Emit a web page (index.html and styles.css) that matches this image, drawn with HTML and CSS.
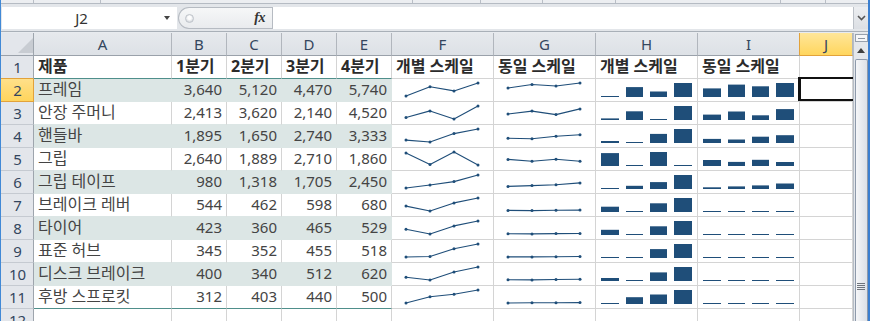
FILE: index.html
```html
<!DOCTYPE html>
<html lang="ko">
<head>
<meta charset="utf-8">
<title>스파크라인</title>
<link rel="stylesheet" href="styles.css">
</head>
<body>
<div class="app">
  <div class="ribbon">
    <span class="rs w33"></span><span class="rs w67"></span><span class="rs w312"></span><span class="rs w68"></span><span class="rs w62"></span><span class="rs w73"></span><span class="rs w165"></span><span class="rs w45"></span>
  </div>
  <div class="fbar">
    <div class="namebox"><span class="nb-text">J2</span><span class="nb-arrow"><i></i></span></div>
    <div class="fxarea"><span class="knob"></span><span class="fx">fx</span></div>
    <div class="finput"></div>
    <div class="fexp"><svg width="9" height="6" viewBox="0 0 9 6"><polyline points="1,1 4.5,4.5 8,1" fill="none" stroke="#555" stroke-width="1.6"/></svg></div>
  </div>
  <div class="main">
    <div class="sheet">
      <!-- column headers -->
      <div class="corner"><i class="tri"></i></div>
      <div class="ch">A</div><div class="ch">B</div><div class="ch">C</div><div class="ch">D</div><div class="ch">E</div>
      <div class="ch">F</div><div class="ch">G</div><div class="ch">H</div><div class="ch ch-presel">I</div><div class="ch ch-sel">J</div>

      <!-- row 1 -->
      <div class="rh rh-presel">1</div>
      <div class="c h hb">제품</div>
      <div class="c h hb">1분기</div>
      <div class="c h hb">2분기</div>
      <div class="c h hb">3분기</div>
      <div class="c h hb">4분기</div>
      <div class="c h">개별 스케일</div>
      <div class="c h">동일 스케일</div>
      <div class="c h">개별 스케일</div>
      <div class="c h">동일 스케일</div>
      <div class="c"></div>

      <!-- row 2 -->
      <div class="rh rh-sel">2</div>
      <div class="c txt tt">프레임</div>
      <div class="c num tt">3,640</div><div class="c num tt">5,120</div><div class="c num tt">4,470</div><div class="c num tt">5,740</div>
      <div class="c sp"><svg class="spark" width="101" height="22"><polyline points="14,17 38,7.8 62,11.9 86,4"/><circle cx="14" cy="17" r="1.5"/><circle cx="38" cy="7.8" r="1.5"/><circle cx="62" cy="11.9" r="1.5"/><circle cx="86" cy="4" r="1.5"/></svg></div>
      <div class="c sp"><svg class="spark" width="101" height="22"><polyline points="14,9 38,5.5 62,7 86,4"/><circle cx="14" cy="9" r="1.5"/><circle cx="38" cy="5.5" r="1.5"/><circle cx="62" cy="7" r="1.5"/><circle cx="86" cy="4" r="1.5"/></svg></div>
      <div class="c sp"><svg class="spark" width="101" height="22"><rect x="5" y="17" width="18" height="1"/><rect x="30" y="8.1" width="17" height="9.9"/><rect x="54" y="12.5" width="17" height="5.5"/><rect x="78" y="4" width="18" height="14"/></svg></div>
      <div class="c sp"><svg class="spark" width="101" height="22"><rect x="5" y="9.4" width="18" height="8.6"/><rect x="30" y="5.6" width="17" height="12.4"/><rect x="54" y="7.3" width="17" height="10.7"/><rect x="78" y="4" width="18" height="14"/></svg></div>
      <div class="c sel"></div>

      <!-- row 3 -->
      <div class="rh">3</div>
      <div class="c txt tb">안장 주머니</div>
      <div class="c num tb">2,413</div><div class="c num tb">3,620</div><div class="c num tb">2,140</div><div class="c num tb">4,520</div>
      <div class="c sp"><svg class="spark" width="101" height="22"><polyline points="14,15.5 38,8.9 62,17 86,4"/><circle cx="14" cy="15.5" r="1.5"/><circle cx="38" cy="8.9" r="1.5"/><circle cx="62" cy="17" r="1.5"/><circle cx="86" cy="4" r="1.5"/></svg></div>
      <div class="c sp"><svg class="spark" width="101" height="22"><polyline points="14,12 38,9.1 62,12.6 86,6.9"/><circle cx="14" cy="12" r="1.5"/><circle cx="38" cy="9.1" r="1.5"/><circle cx="62" cy="12.6" r="1.5"/><circle cx="86" cy="6.9" r="1.5"/></svg></div>
      <div class="c sp"><svg class="spark" width="101" height="22"><rect x="5" y="16.4" width="18" height="1.6"/><rect x="30" y="9.3" width="17" height="8.7"/><rect x="54" y="17" width="17" height="1"/><rect x="78" y="4" width="18" height="14"/></svg></div>
      <div class="c sp"><svg class="spark" width="101" height="22"><rect x="5" y="12.6" width="18" height="5.4"/><rect x="30" y="9.5" width="17" height="8.5"/><rect x="54" y="13.3" width="17" height="4.7"/><rect x="78" y="7.1" width="18" height="10.9"/></svg></div>
      <div class="c"></div>

      <!-- row 4 -->
      <div class="rh">4</div>
      <div class="c txt tt">핸들바</div>
      <div class="c num tt">1,895</div><div class="c num tt">1,650</div><div class="c num tt">2,740</div><div class="c num tt">3,333</div>
      <div class="c sp"><svg class="spark" width="101" height="22"><polyline points="14,15.1 38,17 62,8.6 86,4"/><circle cx="14" cy="15.1" r="1.5"/><circle cx="38" cy="17" r="1.5"/><circle cx="62" cy="8.6" r="1.5"/><circle cx="86" cy="4" r="1.5"/></svg></div>
      <div class="c sp"><svg class="spark" width="101" height="22"><polyline points="14,13.2 38,13.8 62,11.2 86,9.8"/><circle cx="14" cy="13.2" r="1.5"/><circle cx="38" cy="13.8" r="1.5"/><circle cx="62" cy="11.2" r="1.5"/><circle cx="86" cy="9.8" r="1.5"/></svg></div>
      <div class="c sp"><svg class="spark" width="101" height="22"><rect x="5" y="16" width="18" height="2"/><rect x="30" y="17" width="17" height="1"/><rect x="54" y="8.9" width="17" height="9.1"/><rect x="78" y="4" width="18" height="14"/></svg></div>
      <div class="c sp"><svg class="spark" width="101" height="22"><rect x="5" y="13.9" width="18" height="4.1"/><rect x="30" y="14.5" width="17" height="3.5"/><rect x="54" y="11.7" width="17" height="6.3"/><rect x="78" y="10.2" width="18" height="7.8"/></svg></div>
      <div class="c"></div>

      <!-- row 5 -->
      <div class="rh">5</div>
      <div class="c txt tb">그립</div>
      <div class="c num tb">2,640</div><div class="c num tb">1,889</div><div class="c num tb">2,710</div><div class="c num tb">1,860</div>
      <div class="c sp"><svg class="spark" width="101" height="22"><polyline points="14,5.1 38,16.6 62,4 86,17"/><circle cx="14" cy="5.1" r="1.5"/><circle cx="38" cy="16.6" r="1.5"/><circle cx="62" cy="4" r="1.5"/><circle cx="86" cy="17" r="1.5"/></svg></div>
      <div class="c sp"><svg class="spark" width="101" height="22"><polyline points="14,11.4 38,13.2 62,11.3 86,13.3"/><circle cx="14" cy="11.4" r="1.5"/><circle cx="38" cy="13.2" r="1.5"/><circle cx="62" cy="11.3" r="1.5"/><circle cx="86" cy="13.3" r="1.5"/></svg></div>
      <div class="c sp"><svg class="spark" width="101" height="22"><rect x="5" y="5.1" width="18" height="12.9"/><rect x="30" y="17" width="17" height="1"/><rect x="54" y="4" width="17" height="14"/><rect x="78" y="17" width="18" height="1"/></svg></div>
      <div class="c sp"><svg class="spark" width="101" height="22"><rect x="5" y="12" width="18" height="6"/><rect x="30" y="13.9" width="17" height="4.1"/><rect x="54" y="11.8" width="17" height="6.2"/><rect x="78" y="14" width="18" height="4"/></svg></div>
      <div class="c"></div>

      <!-- row 6 -->
      <div class="rh">6</div>
      <div class="c txt tt">그립 테이프</div>
      <div class="c num tt">980</div><div class="c num tt">1,318</div><div class="c num tt">1,705</div><div class="c num tt">2,450</div>
      <div class="c sp"><svg class="spark" width="101" height="22"><polyline points="14,17 38,14 62,10.6 86,4"/><circle cx="14" cy="17" r="1.5"/><circle cx="38" cy="14" r="1.5"/><circle cx="62" cy="10.6" r="1.5"/><circle cx="86" cy="4" r="1.5"/></svg></div>
      <div class="c sp"><svg class="spark" width="101" height="22"><polyline points="14,15.4 38,14.6 62,13.7 86,11.9"/><circle cx="14" cy="15.4" r="1.5"/><circle cx="38" cy="14.6" r="1.5"/><circle cx="62" cy="13.7" r="1.5"/><circle cx="86" cy="11.9" r="1.5"/></svg></div>
      <div class="c sp"><svg class="spark" width="101" height="22"><rect x="5" y="17" width="18" height="1"/><rect x="30" y="14.8" width="17" height="3.2"/><rect x="54" y="11.1" width="17" height="6.9"/><rect x="78" y="4" width="18" height="14"/></svg></div>
      <div class="c sp"><svg class="spark" width="101" height="22"><rect x="5" y="16.3" width="18" height="1.7"/><rect x="30" y="15.4" width="17" height="2.6"/><rect x="54" y="14.4" width="17" height="3.6"/><rect x="78" y="12.5" width="18" height="5.5"/></svg></div>
      <div class="c"></div>

      <!-- row 7 -->
      <div class="rh">7</div>
      <div class="c txt tb">브레이크 레버</div>
      <div class="c num tb">544</div><div class="c num tb">462</div><div class="c num tb">598</div><div class="c num tb">680</div>
      <div class="c sp"><svg class="spark" width="101" height="22"><polyline points="14,12.1 38,17 62,8.9 86,4"/><circle cx="14" cy="12.1" r="1.5"/><circle cx="38" cy="17" r="1.5"/><circle cx="62" cy="8.9" r="1.5"/><circle cx="86" cy="4" r="1.5"/></svg></div>
      <div class="c sp"><svg class="spark" width="101" height="22"><polyline points="14,16.4 38,16.6 62,16.3 86,16.1"/><circle cx="14" cy="16.4" r="1.5"/><circle cx="38" cy="16.6" r="1.5"/><circle cx="62" cy="16.3" r="1.5"/><circle cx="86" cy="16.1" r="1.5"/></svg></div>
      <div class="c sp"><svg class="spark" width="101" height="22"><rect x="5" y="12.7" width="18" height="5.3"/><rect x="30" y="17" width="17" height="1"/><rect x="54" y="9.3" width="17" height="8.7"/><rect x="78" y="4" width="18" height="14"/></svg></div>
      <div class="c sp"><svg class="spark" width="101" height="22"><rect x="5" y="17" width="18" height="1"/><rect x="30" y="17" width="17" height="1"/><rect x="54" y="17" width="17" height="1"/><rect x="78" y="17" width="18" height="1"/></svg></div>
      <div class="c"></div>

      <!-- row 8 -->
      <div class="rh">8</div>
      <div class="c txt tt">타이어</div>
      <div class="c num tt">423</div><div class="c num tt">360</div><div class="c num tt">465</div><div class="c num tt">529</div>
      <div class="c sp"><svg class="spark" width="101" height="22"><polyline points="14,12.2 38,17 62,8.9 86,4"/><circle cx="14" cy="12.2" r="1.5"/><circle cx="38" cy="17" r="1.5"/><circle cx="62" cy="8.9" r="1.5"/><circle cx="86" cy="4" r="1.5"/></svg></div>
      <div class="c sp"><svg class="spark" width="101" height="22"><polyline points="14,16.7 38,16.9 62,16.6 86,16.5"/><circle cx="14" cy="16.7" r="1.5"/><circle cx="38" cy="16.9" r="1.5"/><circle cx="62" cy="16.6" r="1.5"/><circle cx="86" cy="16.5" r="1.5"/></svg></div>
      <div class="c sp"><svg class="spark" width="101" height="22"><rect x="5" y="12.8" width="18" height="5.2"/><rect x="30" y="17" width="17" height="1"/><rect x="54" y="9.3" width="17" height="8.7"/><rect x="78" y="4" width="18" height="14"/></svg></div>
      <div class="c sp"><svg class="spark" width="101" height="22"><rect x="5" y="17" width="18" height="1"/><rect x="30" y="17" width="17" height="1"/><rect x="54" y="17" width="17" height="1"/><rect x="78" y="17" width="18" height="1"/></svg></div>
      <div class="c"></div>

      <!-- row 9 -->
      <div class="rh">9</div>
      <div class="c txt tb">표준 허브</div>
      <div class="c num tb">345</div><div class="c num tb">352</div><div class="c num tb">455</div><div class="c num tb">518</div>
      <div class="c sp"><svg class="spark" width="101" height="22"><polyline points="14,17 38,16.5 62,8.7 86,4"/><circle cx="14" cy="17" r="1.5"/><circle cx="38" cy="16.5" r="1.5"/><circle cx="62" cy="8.7" r="1.5"/><circle cx="86" cy="4" r="1.5"/></svg></div>
      <div class="c sp"><svg class="spark" width="101" height="22"><polyline points="14,16.9 38,16.9 62,16.7 86,16.5"/><circle cx="14" cy="16.9" r="1.5"/><circle cx="38" cy="16.9" r="1.5"/><circle cx="62" cy="16.7" r="1.5"/><circle cx="86" cy="16.5" r="1.5"/></svg></div>
      <div class="c sp"><svg class="spark" width="101" height="22"><rect x="5" y="17" width="18" height="1"/><rect x="30" y="17" width="17" height="1"/><rect x="54" y="9.1" width="17" height="8.9"/><rect x="78" y="4" width="18" height="14"/></svg></div>
      <div class="c sp"><svg class="spark" width="101" height="22"><rect x="5" y="17" width="18" height="1"/><rect x="30" y="17" width="17" height="1"/><rect x="54" y="17" width="17" height="1"/><rect x="78" y="17" width="18" height="1"/></svg></div>
      <div class="c"></div>

      <!-- row 10 -->
      <div class="rh">10</div>
      <div class="c txt tt">디스크 브레이크</div>
      <div class="c num tt">400</div><div class="c num tt">340</div><div class="c num tt">512</div><div class="c num tt">620</div>
      <div class="c sp"><svg class="spark" width="101" height="22"><polyline points="14,14.2 38,17 62,9 86,4"/><circle cx="14" cy="14.2" r="1.5"/><circle cx="38" cy="17" r="1.5"/><circle cx="62" cy="9" r="1.5"/><circle cx="86" cy="4" r="1.5"/></svg></div>
      <div class="c sp"><svg class="spark" width="101" height="22"><polyline points="14,16.8 38,16.9 62,16.5 86,16.3"/><circle cx="14" cy="16.8" r="1.5"/><circle cx="38" cy="16.9" r="1.5"/><circle cx="62" cy="16.5" r="1.5"/><circle cx="86" cy="16.3" r="1.5"/></svg></div>
      <div class="c sp"><svg class="spark" width="101" height="22"><rect x="5" y="15" width="18" height="3"/><rect x="30" y="17" width="17" height="1"/><rect x="54" y="9.4" width="17" height="8.6"/><rect x="78" y="4" width="18" height="14"/></svg></div>
      <div class="c sp"><svg class="spark" width="101" height="22"><rect x="5" y="17" width="18" height="1"/><rect x="30" y="17" width="17" height="1"/><rect x="54" y="17" width="17" height="1"/><rect x="78" y="17" width="18" height="1"/></svg></div>
      <div class="c"></div>

      <!-- row 11 -->
      <div class="rh">11</div>
      <div class="c txt hb">후방 스프로킷</div>
      <div class="c num hb">312</div><div class="c num hb">403</div><div class="c num hb">440</div><div class="c num hb">500</div>
      <div class="c sp"><svg class="spark" width="101" height="22"><polyline points="14,17 38,10.7 62,8.2 86,4"/><circle cx="14" cy="17" r="1.5"/><circle cx="38" cy="10.7" r="1.5"/><circle cx="62" cy="8.2" r="1.5"/><circle cx="86" cy="4" r="1.5"/></svg></div>
      <div class="c sp"><svg class="spark" width="101" height="22"><polyline points="14,17 38,16.8 62,16.7 86,16.6"/><circle cx="14" cy="17" r="1.5"/><circle cx="38" cy="16.8" r="1.5"/><circle cx="62" cy="16.7" r="1.5"/><circle cx="86" cy="16.6" r="1.5"/></svg></div>
      <div class="c sp"><svg class="spark" width="101" height="22"><rect x="5" y="17" width="18" height="1"/><rect x="30" y="11.2" width="17" height="6.8"/><rect x="54" y="8.5" width="17" height="9.5"/><rect x="78" y="4" width="18" height="14"/></svg></div>
      <div class="c sp"><svg class="spark" width="101" height="22"><rect x="5" y="17" width="18" height="1"/><rect x="30" y="17" width="17" height="1"/><rect x="54" y="17" width="17" height="1"/><rect x="78" y="17" width="18" height="1"/></svg></div>
      <div class="c"></div>

      <!-- row 12 -->
      <div class="rh">12</div>
      <div class="c"></div><div class="c"></div><div class="c"></div><div class="c"></div><div class="c"></div>
      <div class="c"></div><div class="c"></div><div class="c"></div><div class="c"></div><div class="c"></div>
    </div>
    <div class="vscroll">
      <div class="split"><i></i></div>
      <div class="up"><i></i></div>
      <div class="thumb"><div class="grip"></div></div>
    </div>
  </div>
</div>
</body>
</html>
```

FILE: styles.css
```css
* { box-sizing: border-box; }

body {
  margin: 0;
  width: 870px;
  height: 321px;
  overflow: hidden;
  background: #fff;
  font-family: "Noto Sans", "Noto Sans CJK KR", sans-serif;
}

.app {
  width: 870px;
  height: 321px;
  display: flex;
  flex-direction: column;
  border-left: 1px solid #4189d6;
  border-right: 2px solid #3b7fd0;
  background: #e8ebef;
  overflow: hidden;
}

/* ribbon bottom edge */
.ribbon {
  height: 4px;
  display: flex;
  background: #eceef1;
  border-bottom: 1px solid #b5bbc3;
  flex: none;
}
.rs { height: 3px; border-right: 1px solid #b9bec6; flex: none; }
.w33 { width: 33px; } .w67 { width: 67px; } .w312 { width: 312px; } .w68 { width: 68px; }
.w62 { width: 62px; } .w73 { width: 73px; } .w165 { width: 165px; } .w45 { width: 45px; }

/* formula bar */
.fbar {
  flex: none;
  height: 28px;
  display: flex;
  padding: 3px 0 2px 1px;
  background: #e3e6ea;
  border-bottom: 1px solid #a9b0b8;
  margin-bottom: 1px;
}
.namebox {
  width: 175px;
  height: 22px;
  background: #fff;
  display: flex;
  align-items: center;
}
.nb-text {
  flex: 1;
  text-align: center;
  font-size: 15px;
  line-height: 22px;
  color: #333;
}
.nb-arrow {
  width: 16px;
  display: flex;
  align-items: center;
  justify-content: flex-start;
  padding-left: 3px;
}
.nb-arrow i {
  width: 0;
  height: 0;
  border-left: 3.5px solid transparent;
  border-right: 3.5px solid transparent;
  border-top: 4px solid #444;
}
.fxarea {
  width: 94px;
  height: 22px;
  margin-left: 1px;
  display: flex;
  align-items: center;
  justify-content: space-between;
  padding: 0 7px 0 6px;
  background: linear-gradient(#f6f7f8, #e9ebee);
  border: 1px solid #b6bbc2;
  border-right: none;
  border-radius: 11px 0 0 11px;
}
.knob {
  width: 9px;
  height: 9px;
  border-radius: 50%;
  border: 1px solid #bfc4ca;
  background: radial-gradient(circle at 50% 40%, #fdfdfd 0 30%, #d9dce1 70%);
}
.fx {
  font-family: "Liberation Serif", serif;
  font-style: italic;
  font-weight: 700;
  font-size: 14px;
  color: #333;
  letter-spacing: -0.5px;
}
.finput {
  flex: 1;
  height: 22px;
  background: #fff;
  border-left: 1px solid #b6bbc2;
}
.fexp {
  width: 15px;
  height: 22px;
  background: linear-gradient(#eceef1, #dcdfe4);
  border-left: 1px solid #bcc1c8;
  display: flex;
  align-items: center;
  justify-content: center;
}

/* main sheet area */
.main {
  flex: 1;
  min-height: 0;
  display: flex;
}
.sheet {
  width: 852px;
  flex: none;
  overflow: hidden;
  display: grid;
  grid-template-columns: 33px 138px repeat(4, 55px) repeat(4, 102px) 53px;
  grid-auto-rows: 23px;
  background: #fff;
}

.corner {
  background: #e3e6eb;
  border-right: 1px solid #9ea5ad;
  border-bottom: 1px solid #9aa1aa;
  display: flex;
  align-items: flex-end;
  justify-content: flex-end;
  padding: 0 0 2px 0;
}
.tri {
  width: 0;
  height: 0;
  border-left: 15px solid transparent;
  border-bottom: 15px solid #c8ccd2;
}

.ch {
  background: linear-gradient(#e6e9ed, #dde1e6);
  border-right: 1px solid #b1b6bd;
  border-bottom: 1px solid #9aa1aa;
  text-align: center;
  font-size: 15px;
  line-height: 22px;
  color: #34465e;
}
.ch-presel { border-right-color: #e2a23a; }
.ch-sel {
  background: linear-gradient(#ffe699, #ffd65e);
  border-bottom-color: #e2a23a;
}

.rh {
  background: #e3e6eb;
  border-right: 1px solid #9ea5ad;
  border-bottom: 1px solid #c5cad1;
  text-align: center;
  font-size: 15px;
  line-height: 22px;
  color: #34465e;
  padding-left: 1px;
}
.rh-presel { border-bottom-color: #e2a23a; }
.rh-sel {
  background: linear-gradient(#ffe08a, #ffd45c);
  border-right-color: #e2a23a;
  border-bottom-color: #e2a23a;
}

/* cells */
.c {
  border-right: 1px solid #d4d4d4;
  border-bottom: 1px solid #d4d4d4;
  font-size: 16px;
  line-height: 21px;
  color: #444;
  white-space: nowrap;
  overflow: hidden;
}
.txt { padding-left: 4px; }
.num {
  text-align: right;
  padding-right: 4px;
  font-size: 15px;
}
.h {
  font-weight: 700;
  color: #2b2b2b;
  padding-left: 4px;
}
.tt { background: #dce6e5; border-color: #dce6e5; }
.tb { border-bottom-color: #dce6e5; }
.hb { border-bottom-color: #4f8f8b; }

.sp { overflow: hidden; }
.spark { display: block; }
.spark polyline { fill: none; stroke: #1f4e79; stroke-width: 1.1; stroke-linejoin: round; }
.spark circle { fill: #1f4e79; }
.spark rect { fill: #1f4e79; }

.sel { position: relative; overflow: visible; }
.sel::after {
  content: "";
  position: absolute;
  left: -2px;
  top: -2px;
  right: -3px;
  bottom: 0;
  border: 2px solid #111;
  border-left-width: 3px;
}

/* vertical scrollbar */
.vscroll {
  width: 15px;
  flex: none;
  background: #e4e7eb;
  border-left: 1px solid #b6bdc6;
  display: flex;
  flex-direction: column;
  align-items: center;
}
.split {
  width: 13px;
  height: 8px;
  margin-top: 1px;
  border: 1px solid #98a1ad;
  background: #f6f7f9;
  display: flex;
  align-items: center;
  justify-content: center;
}
.split i { width: 7px; height: 1px; background: #8c96a3; }
.up {
  width: 14px;
  height: 16px;
  display: flex;
  align-items: center;
  justify-content: center;
}
.up i {
  width: 0;
  height: 0;
  border-left: 4px solid transparent;
  border-right: 4px solid transparent;
  border-bottom: 5px solid #3f3f3f;
}
.thumb {
  width: 13px;
  flex: 1;
  margin-top: 1px;
  border: 1px solid #8e9aab;
  border-bottom: none;
  border-radius: 2px 2px 0 0;
  background: linear-gradient(to right, #f5f6f8, #dde1e7);
  display: flex;
  flex-direction: column;
  align-items: center;
}
.grip {
  margin-top: 223px;
  width: 8px;
  height: 7px;
  background: repeating-linear-gradient(#6f747b 0 1px, transparent 1px 2px);
}
```
